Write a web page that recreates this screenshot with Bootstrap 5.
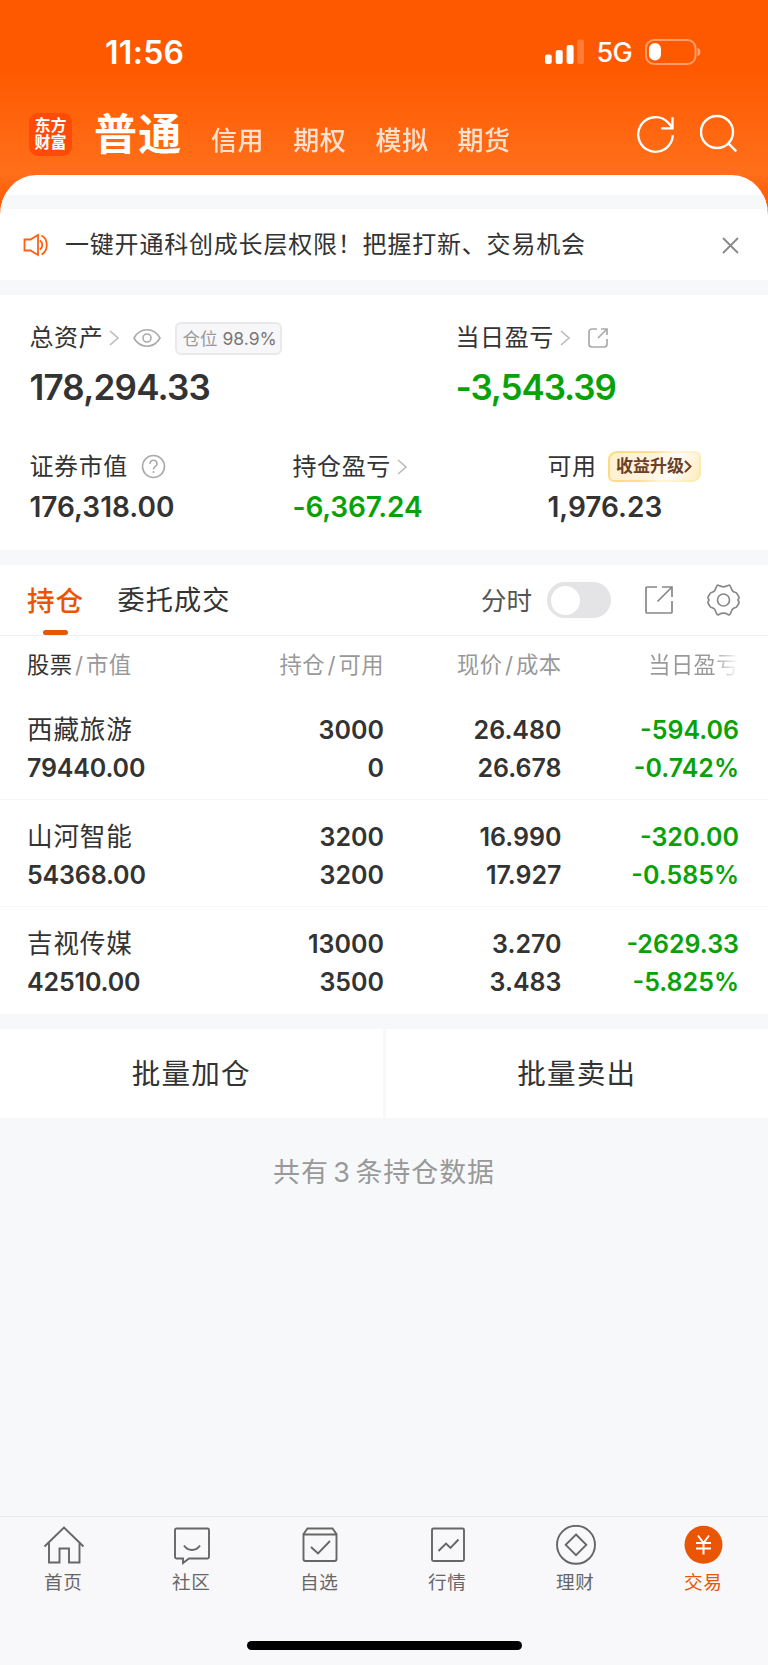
<!DOCTYPE html>
<html lang="zh-CN">
<head>
<meta charset="utf-8">
<meta name="viewport" content="width=device-width, initial-scale=1">
<title>交易 - 持仓</title>
<link rel="stylesheet" href="https://cdn.jsdelivr.net/npm/bootstrap@5.3.0/dist/css/bootstrap.min.css">
<style>
  :root { --ink:#333; --soft:#999; --brand:#ea5504; --fall:#08a208; --band:#f7f8fa; }
  body { width:768px; height:1665px; margin:0; overflow:hidden; background:var(--band); color:var(--ink);
    font-family:Inter,"Noto Sans CJK SC",sans-serif; font-size:24px; line-height:30px; }
  svg { display:block; flex:none; fill:none; }
  .t { white-space:nowrap; }
  .fall { color:var(--fall); }
  .top { height:215px; background:linear-gradient(#ff5900 0,#ff5900 68px,#ff6f1a 172px,#ff5a05 205px,#ff5500 215px); color:#fff; }
  .statusbar { height:105px; padding:38px 66px 0 105px; }
  .clock { font-size:32px; font-weight:600; letter-spacing:.3px; }
  .net { font-size:27px; font-weight:500; letter-spacing:-.7px; width:47px; padding-left:12.5px; }
  .topnav { height:70px; padding:8px 30px 0 29px; }
  .logo { width:43px; height:43px; border-radius:9px; background:#ff4a08; font-size:16px; line-height:17.5px; font-weight:700; text-align:center; padding-top:3.5px; }
  .main-tab { font-size:43px; line-height:42px; font-weight:700; letter-spacing:1.2px; width:117px; padding-left:22px; }
  .sub-tab { font-size:26px; font-weight:500; letter-spacing:.5px; width:82.2px; opacity:.8; padding-top:13px; }
  .sub-first { margin-left:22px; }
  .sheet { margin-top:-40px; height:120px; background:#fff; border-radius:36px 36px 0 0/40px 40px 0 0; overflow:hidden; padding-top:20px; border-bottom:15px solid var(--band); }
  .sheet .gap-band { height:14px; background:var(--band); }
  .notice { height:71px; padding:1px 29px 0 23px; letter-spacing:.8px; }
  .summary { height:255px; background:#fff; }
  .line-a { display:grid; grid-template-columns:426px 1fr; padding-left:29.5px; }
  .line-b { display:grid; grid-template-columns:263px 255px 1fr; padding-left:29.5px; }
  .lbl { letter-spacing:.6px; position:relative; top:.7px; }
  .big { font-size:35px; font-weight:600; line-height:40px; letter-spacing:-.8px; }
  .big.fall { letter-spacing:-1.1px; }
  .mid { font-size:28px; font-weight:600; line-height:34px; }
  .mid.fall { letter-spacing:-.15px; }
  .pos { width:107.500px; height:33px; border:2px solid #e9e9ec; border-radius:6px; background:#f7f7fa; font-size:17.5px; line-height:30px; color:#777; padding-left:6px; margin-top:2px; }
  .up { width:93px; height:31px; border:2px solid transparent; border-radius:9px 6px 9px 6px; font-size:17px; font-weight:700; line-height:27px; color:#6a4128; padding-left:6px;
    background:linear-gradient(115deg,#fff0cf 0,#fff3dc 45%,#fffdf9 70%,#ffebbd 100%) padding-box,linear-gradient(115deg,#fbdb80 0,#fce08d 42%,#fff4d8 62%,#fff3cf 76%,#fde79c 100%) border-box; }
  .holdings { height:449px; margin-top:15px; background:#fff; }
  .tabs { height:71px; border-bottom:1px solid #f0f0f2; padding-left:27px; padding-right:29px; }
  .tabs .t { padding-top:2.5px; }
  .tab-on { color:var(--brand); font-size:27.5px; font-weight:500; width:90.5px; position:relative; letter-spacing:.9px; }
  .tab-on::after { content:""; position:absolute; left:16px; top:46px; width:25px; height:5.5px; border-radius:2.5px; background:var(--brand); }
  .switcher { width:64px; height:36px; border-radius:18px; background:#e4e4e6; padding:3.5px; }
  .switcher i { display:block; width:29px; height:29px; border-radius:50%; background:#fff; }
  .cols { display:grid; grid-template-columns:180px 177px 177.500px 177.500px; padding-left:27px; }
  .cols > div { text-align:right; white-space:nowrap; }
  .cols > div:first-child { text-align:left; }
  .heads { height:57px; padding-top:14px; font-size:22.3px; letter-spacing:.4px; color:var(--soft); }
  .heads s { text-decoration:none; padding:0 2.6px 0 2.6px; }
  .heads .fade-out { background:linear-gradient(90deg,#999 70%,#fff 100%); -webkit-background-clip:text; background-clip:text; color:transparent; }
  .hold { height:107px; padding-top:17.5px; line-height:38.5px; font-size:25px; font-weight:600; border-bottom:1.5px solid #f5f5f7; }
  .hold > div:first-child { letter-spacing:-.15px; }
  .hold .nm { font-size:25.6px; font-weight:400; letter-spacing:.8px; }
  .batch { margin-top:15px; height:89px; display:grid; grid-template-columns:382.500px 382.500px; column-gap:3px; font-size:28.6px; letter-spacing:1.1px; }
  .batch > div { height:89px; padding-top:1px; background:#fff; text-align:center; line-height:88px; }
  .total { height:398px; padding-top:40px; text-align:center; color:var(--soft); font-size:27px; letter-spacing:.9px; word-spacing:-4px; }
  .tabbar { height:149px; border-top:1.5px solid #e8e9eb; background:#f8f8fb; color:#666; }
  .tabbar .it { width:128px; font-size:18.6px; letter-spacing:.6px; line-height:24px; }
  .tabbar .it span { margin-left:-1.5px; }
  .tabbar svg { margin:8px 0 5px; stroke:#666; stroke-width:1.9; }
  .homebar { width:275px; height:9.5px; border-radius:5px; background:#000; margin:46.5px auto 0; }
</style>
</head>
<body>
<header class="top">
  <div class="statusbar d-flex justify-content-between align-items-start">
    <span class="clock t">11:56</span>
    <div class="d-flex">
      <svg width="40" height="30"><g fill="#fff"><rect x="1" y="16.500" width="6.700" height="9.500" rx="2"/><rect x="11.7" y="12" width="7" height="14" rx="2"/><rect x="22.6" y="7" width="7" height="19" rx="2"/><rect x="33.3" y="1.5" width="6.7" height="24.5" rx="2" opacity=".22"/></g></svg>
      <span class="net t">5G</span>
      <svg width="70" height="30" style="margin-left:14px;margin-right:-13px"><rect x="1" y="2" width="49.5" height="24" rx="8" stroke="#fff" stroke-opacity=".42" stroke-width="2"/><rect x="4" y="5" width="12" height="17.5" rx="6" fill="#fff"/><path d="M52.5 10c4 1 4 7 0 8z" fill="#fff" opacity=".45"/></svg>
    </div>
  </div>
  <nav class="topnav d-flex align-items-start">
    <div class="logo">东方<br>财富</div>
    <span class="main-tab t">普通</span>
    <span class="sub-tab sub-first t">信用</span><span class="sub-tab t">期权</span><span class="sub-tab t">模拟</span><span class="sub-tab t">期货</span>
    <div class="d-flex ms-auto">
      <svg width="40" height="43" stroke="#fff" stroke-width="2.4"><path d="M36.800 22.300A17.300 17.300 0 1 1 32.300 9.800L36.300 14.600M36.500 4.200v11.200H25.300"/></svg>
      <svg class="ms-4" width="38" height="43" stroke="#fff" stroke-width="2.4"><circle cx="17" cy="19" r="16"/><path d="M28.3 30.3l8 8"/></svg>
    </div>
  </nav>
</header>
<section class="sheet position-relative">
  <div class="gap-band"></div>
  <div class="notice d-flex align-items-center">
    <svg width="42" height="24" stroke="#ff6010" stroke-width="1.8"><path d="M1.5 6.5h6L15 2v20l-7.500-4.500h-6zM17 7.500c3 2 3 7 0 9M18.500 2.500c7 3.500 7 15.500 0 19"/></svg>
    <span class="t">一键开通科创成长层权限！把握打新、交易机会</span>
    <svg class="ms-auto" width="17" height="17" stroke="#888" stroke-width="1.8"><path d="M1 1l15 15M16 1L1 16"/></svg>
  </div>
</section>
<section class="summary">
  <div class="line-a pt-4">
    <div class="d-flex align-items-center" style="height:37px">
      <span class="lbl t" style="width:79px">总资产</span>
      <svg width="24" height="16" stroke="#bbb" stroke-width="1.6"><path d="M1 1l8 7-8 7"/></svg>
      <svg width="28" height="20" stroke="#aaa" stroke-width="1.6"><path d="M1 10C7-1 21-1 27 10 21 21 7 21 1 10z"/><circle cx="14" cy="10" r="4"/></svg>
      <span class="pos t" style="margin-left:14px"><span style="color:#999">仓位</span> 98.9%</span>
    </div>
    <div class="d-flex align-items-center">
      <span class="lbl t" style="width:104.500px">当日盈亏</span>
      <svg width="27.500" height="16" stroke="#bbb" stroke-width="1.6"><path d="M1 1l8 7-8 7"/></svg>
      <svg width="20" height="21" stroke="#aaa" stroke-width="1.7"><path d="M9 2H4a3 3 0 0 0-3 3v12a3 3 0 0 0 3 3h12a3 3 0 0 0 3-3v-5M13 2h6v6M19 2l-9 9"/></svg>
    </div>
    <div class="big t" style="margin-top:11px">178,294.33</div>
    <div class="big t fall" style="margin-top:11px">-3,543.39</div>
  </div>
  <div class="line-b" style="padding-top:41px">
    <div class="d-flex align-items-center" style="height:37px"><span class="lbl t" style="width:111.500px">证券市值</span>
      <svg width="25" height="25" stroke="#aaa" stroke-width="1.6"><circle cx="12.500" cy="12.500" r="11"/><path d="M9 10c0-5 7-5 7 0 0 2.500-3.500 2.500-3.500 5.500M12.500 17v2"/></svg></div>
    <div class="d-flex align-items-center"><span class="lbl t" style="width:104.500px">持仓盈亏</span>
      <svg width="24" height="16" stroke="#bbb" stroke-width="1.6"><path d="M1 1l8 7-8 7"/></svg></div>
    <div class="d-flex align-items-center"><span class="lbl t" style="width:60.500px">可用</span><span class="up d-flex align-items-center t">收益升级<svg width="8" height="13" stroke="#6a4128" stroke-width="2"><path d="M1 1l5.500 5.500L1 12"/></svg></span></div>
    <div class="mid t" style="margin-top:5px">176,318.00</div>
    <div class="mid t fall" style="margin-top:5px">-6,367.24</div>
    <div class="mid t" style="margin-top:5px">1,976.23</div>
  </div>
</section>
<section class="holdings">
  <div class="tabs d-flex align-items-center">
    <span class="tab-on t">持仓</span>
    <span class="t" style="font-size:27.200px;letter-spacing:1.1px">委托成交</span>
    <span class="t ms-auto" style="font-size:25.500px;color:#555;width:66px">分时</span>
    <div class="switcher"><i></i></div>
    <svg style="margin-left:34px" width="28" height="28" stroke="#888" stroke-width="1.7"><path d="M12 1H2a1 1 0 0 0-1 1v24a1 1 0 0 0 1 1h24a1 1 0 0 0 1-1V15M17 1h10v10M27 1L12.500 15.500"/></svg>
    <svg style="margin-left:33.500px;margin-right:-.5px" width="33" height="32" stroke="#888" stroke-width="1.7"><circle cx="16.500" cy="16" r="6"/><path d="M9.500 2.500C10 1 11 1 12 1.600Q16.500 4 21 1.600C22 1 23 1 23.500 2.500L24.500 5Q25.500 8 28.500 8.500C30 9 30 9.500 30.800 11L32 13C32.500 14.500 31 15 31 16S32.500 17.500 32 19L30.800 21C30 22.500 30 23 28.500 23.500Q25.500 24 24.500 27L23.500 29.500C23 31 22 31 21 30.400Q16.500 28 12 30.400C11 31 10 31 9.500 29.500L8.500 27Q7.500 24 4.500 23.500C3 23 3 22.500 2.200 21L1 19C.5 17.500 2 17 2 16S.5 14.500 1 13L2.200 11C3 9.500 3 9 4.500 8.500Q7.500 8 8.500 5z"/></svg>
  </div>
  <div class="cols heads"><div><span style="color:#333">股票</span><s>/</s>市值</div><div>持仓<s>/</s>可用</div><div>现价<s>/</s>成本</div><div><span class="fade-out">当日盈亏</span></div></div>
  <div class="cols hold"><div><span class="nm">西藏旅游</span><br>79440.00</div><div>3000<br>0</div><div>26.480<br>26.678</div><div class="fall">-594.06<br>-0.742%</div></div>
  <div class="cols hold"><div><span class="nm">山河智能</span><br>54368.00</div><div>3200<br>3200</div><div>16.990<br>17.927</div><div class="fall">-320.00<br>-0.585%</div></div>
  <div class="cols hold border-bottom-0"><div><span class="nm">吉视传媒</span><br>42510.00</div><div>13000<br>3500</div><div>3.270<br>3.483</div><div class="fall">-2629.33<br>-5.825%</div></div>
</section>
<section class="batch"><div>批量加仓</div><div>批量卖出</div></section>
<div class="total t">共有 3 条持仓数据</div>
<footer class="tabbar">
  <div class="d-flex">
    <div class="it d-flex flex-column align-items-center"><svg width="42" height="40"><path d="M1.500 21.500L21 2.500l19.500 19M6 18v19.500h10.500V23.500h9.500v14h10.500V18"/></svg><span>首页</span></div>
    <div class="it d-flex flex-column align-items-center"><svg width="42" height="40"><path d="M5.500 3.500h31a1.500 1.500 0 0 1 1.500 1.500v27a1.500 1.500 0 0 1-1.500 1.500H18L12 38v-4.500H5.500A1.500 1.500 0 0 1 4 32V5a1.500 1.500 0 0 1 1.500-1.500zM13 20.500c4 6 12 6 16 0"/></svg><span>社区</span></div>
    <div class="it d-flex flex-column align-items-center"><svg width="42" height="40"><path d="M4.500 9l4-5.500h25l4 5.500v25a2 2 0 0 1-2 2h-29a2 2 0 0 1-2-2zM4.500 9.500h33M12 22l7 6.500L31 16"/></svg><span>自选</span></div>
    <div class="it d-flex flex-column align-items-center"><svg width="42" height="40"><rect x="5" y="3.500" width="32" height="32.500" rx="1.500"/><path d="M11.500 26l7.500-7.500 4.500 4.500 8-8.500"/></svg><span>行情</span></div>
    <div class="it d-flex flex-column align-items-center"><svg width="42" height="40"><circle cx="21" cy="19.800" r="19"/><path d="M21 9.500L31.300 19.800 21 30.100 10.700 19.800z"/></svg><span>理财</span></div>
    <div class="it d-flex flex-column align-items-center" style="color:var(--brand)"><svg width="42" height="40"><circle cx="20.500" cy="19.800" r="19" fill="#ea5504" stroke="none"/><path stroke="#fff" stroke-width="2" d="M15 10.500L20.500 18l5.500-7.500M20.500 18v11.500M13 18h15M13 23.500h15"/></svg><span>交易</span></div>
  </div>
  <div class="homebar"></div>
</footer>
<script src="https://cdn.jsdelivr.net/npm/bootstrap@5.3.0/dist/js/bootstrap.bundle.min.js"></script>
</body>
</html>
